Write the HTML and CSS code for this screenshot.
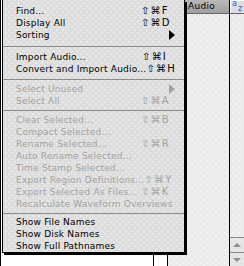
FILE: index.html
```html
<!DOCTYPE html>
<html lang="en">
<head>
    <meta charset="UTF-8">
    <title>Audio Menu</title>
    <link rel="stylesheet" href="styles.css">
</head>
<body>
    <div class="window">
        <div class="gutter"></div>
        <div class="spacer"></div>
        <div class="list">
            <div class="col-head">Audio</div>
            <div class="list-body"></div>
        </div>
        <div class="scroll">
            <div class="sort-btn"><span class="sort-a">a</span><span class="sort-z">z</span></div>
            <div class="track"></div>
            <div class="arrow up"></div>
            <div class="arrow down"></div>
        </div>
    </div>

    <div class="menu">
        <div class="item"><span class="label">Find...</span><span class="key">⇧⌘F</span></div>
        <div class="item"><span class="label">Display All</span><span class="key">⇧⌘D</span></div>
        <div class="item"><span class="label">Sorting</span><span class="sub"></span></div>
        <div class="sep tall"></div>
        <div class="item"><span class="label">Import Audio...</span><span class="key">⇧⌘I</span></div>
        <div class="item"><span class="label">Convert and Import Audio...</span><span class="key">⇧⌘H</span></div>
        <div class="sep"></div>
        <div class="item off"><span class="label">Select Unused</span><span class="sub"></span></div>
        <div class="item off"><span class="label">Select All</span><span class="key">⇧⌘A</span></div>
        <div class="sep short"></div>
        <div class="item off"><span class="label">Clear Selected...</span><span class="key">⇧⌘B</span></div>
        <div class="item off"><span class="label">Compact Selected...</span></div>
        <div class="item off"><span class="label">Rename Selected...</span><span class="key">⇧⌘R</span></div>
        <div class="item off"><span class="label">Auto Rename Selected...</span></div>
        <div class="item off"><span class="label">Time Stamp Selected...</span></div>
        <div class="item off"><span class="label">Export Region Definitions...</span><span class="key">⇧⌘Y</span></div>
        <div class="item off"><span class="label">Export Selected As Files...</span><span class="key">⇧⌘K</span></div>
        <div class="item off"><span class="label">Recalculate Waveform Overviews</span></div>
        <div class="sep tight"></div>
        <div class="item"><span class="label">Show File Names</span></div>
        <div class="item"><span class="label">Show Disk Names</span></div>
        <div class="item"><span class="label">Show Full Pathnames</span></div>
    </div>
</body>
</html>
```

FILE: styles.css
```css
body {
    margin: 0;
    width: 244px;
    height: 266px;
    overflow: hidden;
    position: relative;
    background: #fff;
    font-family: "DejaVu Sans", sans-serif;
    font-size: 9px;
}
.window {
    display: flex;
    height: 266px;
}
.gutter {
    width: 152px;
    border-left: 1px solid #000;
    border-right: 1px solid #000;
}
.spacer {
    width: 13px;
    border-right: 1px solid #000;
}
.list {
    width: 61px;
    border-right: 1px solid #000;
    display: flex;
    flex-direction: column;
}
.col-head {
    height: 13px;
    line-height: 13px;
    padding-left: 20px;
    border-bottom: 1px solid #666;
    background: linear-gradient(#b9b9b9, #9f9f9f);
    color: #000;
    letter-spacing: 0.3px;
}
.list-body,
.track {
    flex: 1;
    background-color: #ebebeb;
    background-image: radial-gradient(rgba(255,255,255,.8) 0.5px, transparent 0.9px),
                      radial-gradient(rgba(255,255,255,.8) 0.5px, transparent 0.9px);
    background-size: 6px 6px;
    background-position: 0 0, 3px 3px;
}
.scroll {
    width: 14px;
    display: flex;
    flex-direction: column;
}
.sort-btn {
    height: 13px;
    border-bottom: 1px solid #666;
    background: #dedede;
    box-shadow: inset 1px 1px 0 #fff;
    display: flex;
    padding-left: 2px;
    color: #1e5bff;
    font-size: 8px;
}
.sort-a {
    line-height: 8px;
}
.sort-z {
    line-height: 8px;
    align-self: flex-end;
    margin-left: 1px;
}
.arrow {
    height: 14px;
    border-top: 1px solid #888;
    background: #e6e6e6;
    display: flex;
    align-items: center;
    justify-content: center;
}
.arrow.down {
    height: 13px;
}
.arrow::before {
    content: "";
    border-left: 4px solid transparent;
    border-right: 4px solid transparent;
}
.arrow.up::before {
    border-bottom: 4px solid #8f8f8f;
}
.arrow.down::before {
    border-top: 4px solid #8f8f8f;
}

/* pulled-down menu */
.menu {
    position: absolute;
    left: 2px;
    top: 0;
    width: 181px;
    padding-top: 5px;
    border: 1px solid #000;
    border-top: 0;
    box-shadow: 2px 2px 0 #000;
    background-color: #dddddd;
    background-image: radial-gradient(rgba(255,255,255,.7) 0.5px, transparent 0.9px),
                      radial-gradient(rgba(255,255,255,.7) 0.5px, transparent 0.9px);
    background-size: 6px 6px;
    background-position: 0 0, 3px 3px;
}
.item {
    height: 12px;
    line-height: 12px;
    display: flex;
    padding: 0 9px 0 13px;
    color: #000;
    white-space: nowrap;
    letter-spacing: 0.2px;
}
.item.off {
    color: #a2a2a2;
}
.label {
    flex: 1;
}
.key {
    width: 26px;
    margin-right: 8px;
    text-align: right;
    font-size: 10px;
    letter-spacing: 1.2px;
}
.sub {
    width: 0;
    height: 0;
    margin-top: 1px;
    border-left: 6px solid #000;
    border-top: 5px solid transparent;
    border-bottom: 5px solid transparent;
}
.off .sub {
    border-left-color: #a2a2a2;
}
.sep {
    height: 8px;
    display: flex;
    align-items: center;
}
.sep::before {
    content: "";
    flex: 1;
    height: 1px;
    background: #8a8a8a;
}
.sep.tall {
    height: 10px;
}
.sep.short {
    height: 7px;
}
.sep.tight {
    height: 6px;
}
```
